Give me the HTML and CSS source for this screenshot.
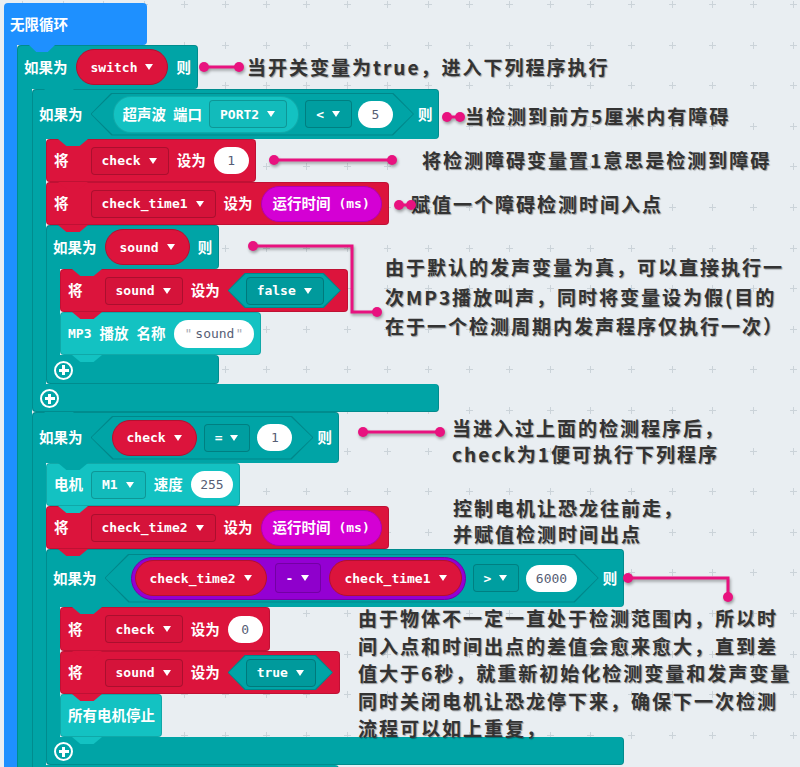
FILE: index.html
```html
<!DOCTYPE html>
<html lang="zh">
<head>
<meta charset="utf-8">
<title>无限循环</title>
<link rel="stylesheet" href="styles.css">
</head>
<body>
<div class="ws">
  <div class="program">
    <div class="c forever">
      <div class="hd"><span class="lbl">无限循环</span></div>
      <div class="bd"><div class="arm"></div><div class="stack">

        <div class="c logic cw15">
          <div class="hd h44"><span class="lbl">如果为</span><span class="pill var">switch<i class="ar"></i></span><span class="lbl">则</span></div>
          <div class="bd"><div class="arm"></div><div class="stack">

            <div class="c logic">
              <div class="hd h50"><span class="lbl">如果为</span>
                <div class="hex hx-a">
                  <span class="pill sonar"><span class="lbl">超声波</span><span class="lbl">端口</span><span class="dd">PORT2<i class="ar"></i></span></span>
                  <span class="dd">&lt;<i class="ar"></i></span>
                  <span class="num">5</span>
                </div>
                <span class="lbl">则</span></div>
              <div class="bd"><div class="arm"></div><div class="stack">
                <div class="blk red"><span class="lbl set">将</span><span class="dd">check<i class="ar"></i></span><span class="lbl">设为</span><span class="num">1</span></div>
                <div class="blk red"><span class="lbl set">将</span><span class="dd">check_time1<i class="ar"></i></span><span class="lbl">设为</span><span class="pill time"><span class="lbl">运行时间</span>&nbsp;(ms)</span></div>

                <div class="c logic">
                  <div class="hd h44"><span class="lbl">如果为</span><span class="pill var">sound<i class="ar"></i></span><span class="lbl">则</span></div>
                  <div class="bd"><div class="arm"></div><div class="stack">
                    <div class="blk red"><span class="lbl set">将</span><span class="dd">sound<i class="ar"></i></span><span class="lbl">设为</span><div class="hex hx-s"><span class="dd">false<i class="ar"></i></span></div></div>
                    <div class="blk tq"><span class="mono">MP3</span><span class="lbl">播放</span><span class="lbl">名称</span><span class="str"><span class="q">"</span><span class="sv">sound</span><span class="q">"</span></span></div>
                  </div></div>
                  <div class="ft h29"><span class="plus"></span></div>
                </div>

              </div></div>
              <div class="ft"><span class="plus"></span></div>
            </div>

            <div class="c logic">
              <div class="hd h51"><span class="lbl">如果为</span>
                <div class="hex hx-b">
                  <span class="pill var">check<i class="ar"></i></span>
                  <span class="dd">=<i class="ar"></i></span>
                  <span class="num">1</span>
                </div>
                <span class="lbl">则</span></div>
              <div class="bd"><div class="arm"></div><div class="stack">
                <div class="blk tq"><span class="lbl">电机</span><span class="dd">M1<i class="ar"></i></span><span class="lbl">速度</span><span class="num">255</span></div>
                <div class="blk red"><span class="lbl set">将</span><span class="dd">check_time2<i class="ar"></i></span><span class="lbl">设为</span><span class="pill time"><span class="lbl">运行时间</span>&nbsp;(ms)</span></div>

                <div class="c logic">
                  <div class="hd h58"><span class="lbl">如果为</span>
                    <div class="hex hx-c">
                      <span class="pill math">
                        <span class="pill var">check_time2<i class="ar"></i></span>
                        <span class="dd">-<i class="ar"></i></span>
                        <span class="pill var">check_time1<i class="ar"></i></span>
                      </span>
                      <span class="dd">&gt;<i class="ar"></i></span>
                      <span class="num">6000</span>
                    </div>
                    <span class="lbl">则</span></div>
                  <div class="bd"><div class="arm"></div><div class="stack">
                    <div class="blk red h44"><span class="lbl set">将</span><span class="dd">check<i class="ar"></i></span><span class="lbl">设为</span><span class="num">0</span></div>
                    <div class="blk red"><span class="lbl set">将</span><span class="dd">sound<i class="ar"></i></span><span class="lbl">设为</span><div class="hex hx-s"><span class="dd">true<i class="ar"></i></span></div></div>
                    <div class="blk tq"><span class="lbl">所有电机停止</span></div>
                  </div></div>
                  <div class="ft"><span class="plus"></span></div>
                </div>

              </div></div>
              <div class="ft"><span class="plus"></span></div>
            </div>

          </div></div>
          <div class="ft"><span class="plus"></span></div>
        </div>

      </div></div>
    </div>
  </div>

  <div class="note n1">当开关变量为true，进入下列程序执行</div>
  <div class="note n2">当检测到前方5厘米内有障碍</div>
  <div class="note n3">将检测障碍变量置1意思是检测到障碍</div>
  <div class="note n4">赋值一个障碍检测时间入点</div>
  <div class="note n5">由于默认的发声变量为真，可以直接执行一<br>次MP3播放叫声，同时将变量设为假(目的<br>在于一个检测周期内发声程序仅执行一次）</div>
  <div class="note n6">当进入过上面的检测程序后，<br>check为1便可执行下列程序</div>
  <div class="note n7">控制电机让恐龙往前走，<br>并赋值检测时间出点</div>
  <div class="note n8">由于物体不一定一直处于检测范围内，所以时<br>间入点和时间出点的差值会愈来愈大，直到差<br>值大于6秒，就重新初始化检测变量和发声变量<br>同时关闭电机让恐龙停下来，确保下一次检测<br>流程可以如上重复，</div>

  <svg class="wires" width="800" height="767" viewBox="0 0 800 767">
    <g class="w">
      <path d="M204 67H239"/><circle cx="204" cy="67" r="5"/><circle cx="239" cy="67" r="5"/>
      <path d="M447 117H460"/><circle cx="447" cy="117" r="5"/><circle cx="460" cy="117" r="5"/>
      <path d="M274 160H392"/><circle cx="274" cy="160" r="5"/><circle cx="392" cy="160" r="5"/>
      <path d="M399 205H411"/><circle cx="399" cy="205" r="5"/><circle cx="411" cy="205" r="5"/>
      <path d="M253 246H352V312H377"/><circle cx="253" cy="246" r="5"/><circle cx="377" cy="312" r="5"/>
      <path d="M363 432H440"/><circle cx="363" cy="432" r="5"/><circle cx="440" cy="432" r="5"/>
      <path d="M628 578H728V597"/><circle cx="628" cy="578" r="5"/><circle cx="728" cy="597" r="5"/>
    </g>
  </svg>
</div>
</body>
</html>
```

FILE: styles.css
```css
* { box-sizing: border-box; }
html, body { margin: 0; height: 767px; overflow: hidden; }
body { background: #e9eef2; font-family: "Noto Sans CJK SC", "Noto Sans", sans-serif; }

.ws { position: relative; width: 800px; height: 767px; overflow: hidden; background: #e9eef2; }
.ws::before, .ws::after { content: ""; position: absolute; inset: 0; pointer-events: none; }
.ws::before {
  background: repeating-linear-gradient(to bottom, transparent 0 4px, #cbd3d9 4px 5px, transparent 5px 40.6px);
  -webkit-mask-image: repeating-linear-gradient(to right, transparent 0 19px, #000 19px 26px, transparent 26px 40.6px);
  mask-image: repeating-linear-gradient(to right, transparent 0 19px, #000 19px 26px, transparent 26px 40.6px);
}
.ws::after {
  background: repeating-linear-gradient(to right, transparent 0 22px, #cbd3d9 22px 23px, transparent 23px 40.6px);
  -webkit-mask-image: repeating-linear-gradient(to bottom, transparent 0 1px, #000 1px 8px, transparent 8px 40.6px);
  mask-image: repeating-linear-gradient(to bottom, transparent 0 1px, #000 1px 8px, transparent 8px 40.6px);
}

.program { position: relative; z-index: 1; padding: 3px 0 0 4px; }

/* block structure */
.c { width: max-content; position: relative; }
.bd { display: flex; }
.arm { width: 14px; flex: none; box-shadow: inset 1px 0 0 rgba(0,0,0,.14); }
.stack { width: 0; flex: none; }
.hd, .blk {
  position: relative; display: flex; align-items: center; gap: 8px;
  width: max-content; height: 43px; padding: 0 7px 0 7px;
  color: #fff; border-radius: 4px; white-space: nowrap;
}
.blk { padding-left: 8px; box-shadow: inset 0 0 0 1px rgba(0,0,0,.13); }
.hd { border-bottom-left-radius: 0; box-shadow: inset 1px 1px 0 rgba(0,0,0,.14), inset -1px 0 0 rgba(0,0,0,.14); }
.ft { position: relative; height: 28px; border-radius: 0 4px 4px 4px; box-shadow: inset 1px -1px 0 rgba(0,0,0,.14), inset -1px 0 0 rgba(0,0,0,.14); }
.h29 { height: 29px; }
.h44 { height: 44px; }
.h50 { height: 50px; }
.h51 { height: 51px; }
.h58 { height: 58px; }

/* connection tabs */
.hd::after, .blk::after, .ft::after {
  content: ""; position: absolute; top: 100%; left: 12px; width: 30px; height: 7px;
  background: inherit; z-index: 3;
  clip-path: polygon(0 0, 100% 0, 72% 100%, 28% 100%);
}
.hd::after { left: 26px; }
.cw15 > .hd::after { left: 27px; }
.forever > .hd::after { left: 25px; width: 26px; }

/* colours */
.forever > .hd, .forever > .bd > .arm, .forever > .ft { background: #1e90ff; }
.forever > .hd { height: 42px; min-width: 143px; padding-left: 6px; box-shadow: none; }
.forever > .bd > .arm { width: 13px; box-shadow: none; }
.cw15 > .bd > .arm { width: 15px; }
.logic > .hd, .logic > .bd > .arm, .logic > .ft { background: #00a4a6; }
.red { background: #dc143c; }
.tq { background: #13c2c2; }

/* text */
.lbl { font: 700 14.5px/1 "Noto Sans CJK SC", sans-serif; color: #fff; }
.set { margin-right: 14px; }
.mono { font: 700 13px/1 "DejaVu Sans Mono", monospace; color: #fff; }

/* fields */
.dd {
  display: inline-flex; align-items: center; height: 28px; padding: 0 11px 0 10px;
  border: 1px solid rgba(0,0,0,.2); border-radius: 4px; background: rgba(0,0,0,.03);
  font: 700 13px/1 "DejaVu Sans Mono", monospace; color: #fff; white-space: pre;
}
.ar {
  display: inline-block; width: 0; height: 0; margin-left: 8px;
  border-left: 4.5px solid transparent; border-right: 4.5px solid transparent; border-top: 6px solid #fff;
}
.pill {
  display: inline-flex; align-items: center; height: 36px; border-radius: 18px;
  font: 700 13px/1 "DejaVu Sans Mono", monospace; color: #fff; white-space: pre;
}
.pill.var { background: #dc143c; border: 1px solid #b3102f; padding: 0 14px; }
.pill.time { background: #d400d4; border: 1px solid #b000b0; padding: 0 11px; }
.pill.sonar { background: #13c2c2; border: 1px solid rgba(0,0,0,.12); height: 37px; padding: 0 11px 0 9px; gap: 7px; }
.pill.math { background: #9400d3; border: 1px solid #7400a8; height: 43px; border-radius: 22px; padding: 0 3px; gap: 8px; }
.pill.math .dd { height: 30px; }
.num {
  display: inline-flex; align-items: center; justify-content: center;
  height: 27px; min-width: 35px; padding: 0 9.5px; border-radius: 14px; background: #fff;
  font: 400 13px/1 "DejaVu Sans Mono", monospace; color: #575e75;
}
.str {
  display: inline-flex; align-items: center; height: 28px; padding: 0 11px 0 10px; border-radius: 14px; background: #fff;
  font: 400 13px/1 "DejaVu Sans Mono", monospace; color: #575e75; margin-left: 1px;
}
.str .q { color: #a8aab5; }
.str .sv { margin: 0 1px 0 3px; }

/* boolean hexagons */
.hex {
  --p: 21px;
  position: relative; isolation: isolate; display: flex; align-items: center; gap: 7px;
  background: #00878a; margin-right: -4px;
  clip-path: polygon(var(--p) 0, calc(100% - var(--p)) 0, 100% 50%, calc(100% - var(--p)) 100%, var(--p) 100%, 0 50%);
}
.hex::before {
  content: ""; position: absolute; inset: 1px; z-index: -1; background: #00a4a6;
  clip-path: polygon(var(--p) 0, calc(100% - var(--p)) 0, 100% 50%, calc(100% - var(--p)) 100%, var(--p) 100%, 0 50%);
}
.hx-a { height: 43px; padding: 0 21px 0 22px; gap: 6px; --p: 21px; }
.hx-b { height: 44px; padding: 0 21px; --p: 22px; }
.hx-c { height: 49px; padding: 0 22px 0 26px; --p: 24px; }
.hx-s { height: 35px; padding: 0 17px 0 18px; --p: 17px; margin-right: 0; }
.hx-s .dd { background: #009a9c; border-color: #00797b; }

/* add buttons */
.plus {
  position: absolute; left: 8px; top: 50%; margin-top: -9px; width: 19px; height: 19px;
  border: 2px solid #fff; border-radius: 50%;
}
.plus::before, .plus::after { content: ""; position: absolute; background: #fff; left: 50%; top: 50%; }
.plus::before { width: 10px; height: 3px; margin: -1.5px 0 0 -5px; }
.plus::after { width: 3px; height: 10px; margin: -5px 0 0 -1.5px; }
.cw15 > .ft .plus { left: 9px; }

/* annotations */
.note {
  position: absolute; z-index: 4; white-space: nowrap;
  font: 700 19px/28px "Noto Sans CJK SC", sans-serif; letter-spacing: 2px;
  color: #333; text-shadow: 1px 1px 1px rgba(0,0,0,.35);
}
.n1 { left: 247px; top: 53px; }
.n2 { left: 465px; top: 102px; }
.n3 { left: 422px; top: 146px; }
.n4 { left: 411px; top: 190px; }
.n5 { left: 385px; top: 252px; line-height: 29.5px; }
.n6 { left: 452px; top: 415px; line-height: 25.5px; }
.n7 { left: 453px; top: 495px; line-height: 26px; }
.n8 { left: 358px; top: 604px; line-height: 27.5px; }

.wires { position: absolute; left: 0; top: 0; z-index: 5; pointer-events: none; filter: drop-shadow(1px 2px 1.5px rgba(0,0,0,.35)); }
.wires .w path { fill: none; stroke: #e8127f; stroke-width: 3; }
.wires .w circle { fill: #e8127f; }
```
